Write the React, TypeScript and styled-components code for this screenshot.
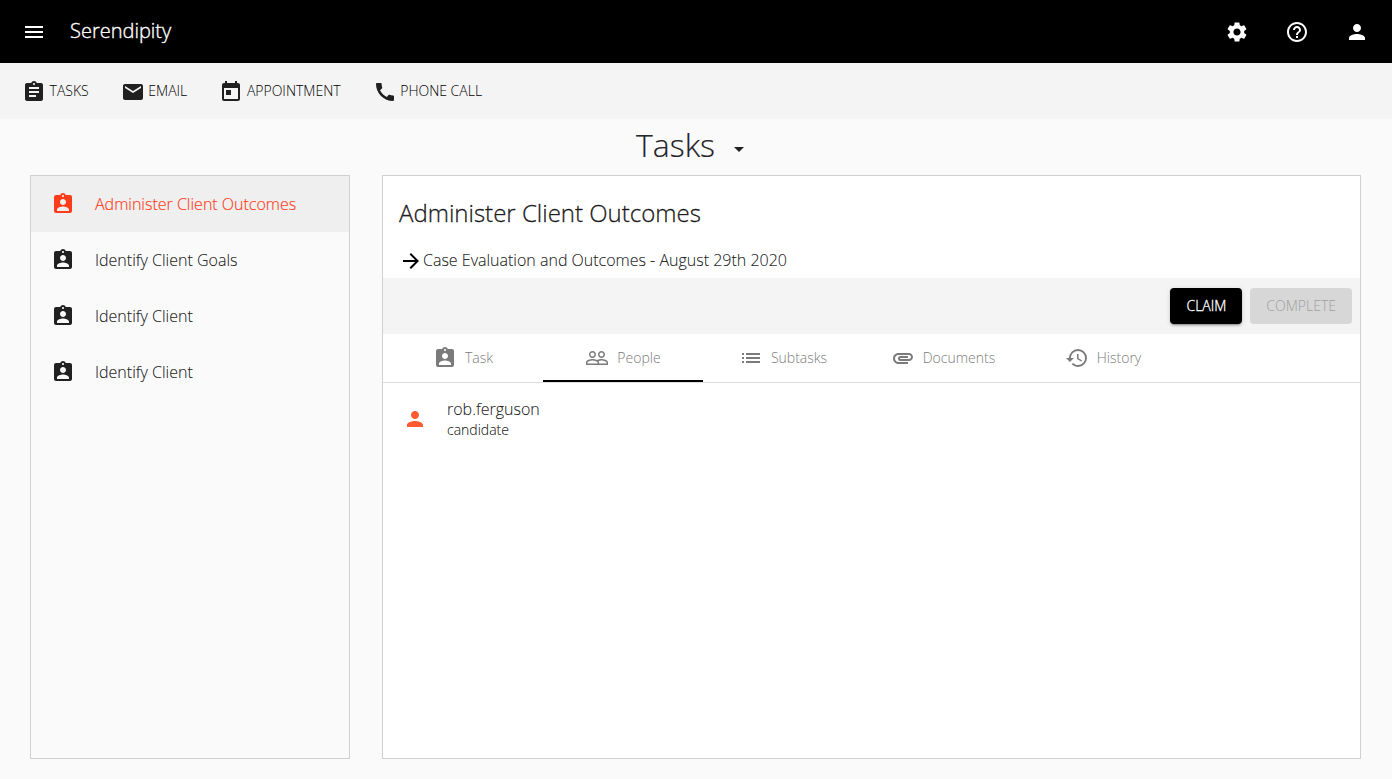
import React from 'react';
import styled, { createGlobalStyle } from 'styled-components';
import {
  MdMenu, MdSettings, MdHelpOutline, MdPerson, MdAssignment, MdEmail, MdToday, MdCall,
  MdArrowDropDown, MdAssignmentInd, MdArrowForward, MdList, MdAttachment, MdHistory,
} from 'react-icons/md';

const GlobalStyle = createGlobalStyle`
  * { box-sizing: border-box; }
  body {
    margin: 0;
    background: #fafafa;
    color: rgba(0, 0, 0, 0.87);
    font-family: "Open Sans", sans-serif;
    font-weight: 300;
    -webkit-font-smoothing: antialiased;
  }
  svg { display: block; flex: none; width: 24px; height: 24px; }
`;

const Page = styled.div`
  display: flex;
  flex-direction: column;
  height: 779px;
`;

const Header = styled.header`
  display: flex;
  align-items: center;
  height: 63px;
  padding: 1px 23px 0 22px;
  background: #000;
  color: #fff;
`;

const Brand = styled.span`
  margin: -3px auto 0 24px;
  font-size: 20px;
  line-height: 32px;
  font-weight: 300;
  -webkit-text-stroke: 0.35px currentColor;
`;

const HeaderActions = styled.div`
  display: flex;
  gap: 36px;
`;

const CommandBar = styled.nav`
  display: flex;
  align-items: center;
  gap: 32px;
  height: 56px;
  padding: 2px 22px 0;
  background: #f4f4f4;
`;

const Command = styled.a`
  display: flex;
  align-items: center;
  gap: 3.6px;
  font-size: 14px;
  line-height: 24px;

  span { margin-top: -3px; color: #000; }
`;

const Heading = styled.h1`
  display: flex;
  justify-content: center;
  align-items: center;
  gap: 12px;
  height: 56px;
  margin: 0;
  padding-right: 5px;
  font-size: 32px;
  line-height: 40px;
  font-weight: 300;
  -webkit-text-stroke: 0.2px currentColor;

  span { margin-top: -4px; }
  svg { margin-top: 4px; }
`;

const Content = styled.main`
  display: flex;
  flex: 1;
  gap: 32px;
  padding: 0 31px 20px 30px;
`;

const Sidebar = styled.aside`
  width: 320px;
  border: 1px solid #d0d0d0;
`;

const SidebarItem = styled.div<{ $active?: boolean }>`
  display: flex;
  align-items: center;
  gap: 20px;
  height: 56px;
  padding: 0 20px;
  font-size: 16px;
  background: ${(p) => (p.$active ? '#efefef' : 'transparent')};
  color: ${(p) => (p.$active ? '#ff3d1a' : 'inherit')};

  span { -webkit-text-stroke: 0.15px currentColor; }
`;

const Panel = styled.section`
  flex: 1;
  border: 1px solid #d0d0d0;
  background: #fff;
`;

const PanelTitle = styled.h2`
  margin: 0;
  padding: 21px 16px 0;
  font-size: 24px;
  line-height: 32px;
  font-weight: 300;
  -webkit-text-stroke: 0.35px currentColor;
`;

const CaseLine = styled.div`
  display: flex;
  align-items: center;
  height: 49px;
  padding: 13px 16px 0;
  font-size: 16px;
  line-height: 24px;

  svg { margin-top: 1px; color: #000; }
  span { margin-top: -1px; -webkit-text-stroke: 0.15px currentColor; }
`;

const ActionBar = styled.div`
  display: flex;
  justify-content: flex-end;
  align-items: center;
  gap: 8px;
  height: 56px;
  padding: 0 8px;
  background: #f4f4f4;
`;

const Button = styled.button`
  height: 36px;
  padding: 0 16px;
  border: 0;
  border-radius: 4px;
  font: 300 14px/36px "Open Sans", sans-serif;
  background: #000;
  color: #fff;
  -webkit-text-stroke: 0.3px currentColor;
  box-shadow: 0 3px 1px -2px rgba(0, 0, 0, 0.2), 0 2px 2px rgba(0, 0, 0, 0.14), 0 1px 5px rgba(0, 0, 0, 0.12);

  &:disabled {
    background: #d7d7d7;
    color: #a0a0a0;
    -webkit-text-stroke: 0;
    box-shadow: none;
  }
`;

const Tabs = styled.div`
  display: flex;
  height: 49px;
  border-bottom: 1px solid #dedede;
`;

const Tab = styled.div<{ $active?: boolean }>`
  display: flex;
  justify-content: center;
  align-items: center;
  gap: 8px;
  width: 160px;
  height: 48px;
  font-size: 14px;
  color: #7b7b7b;
  box-shadow: ${(p) => (p.$active ? 'inset 0 -2px #000' : 'none')};

  span { margin-top: -2px; }
`;

const Person = styled.div`
  display: flex;
  align-items: center;
  gap: 20px;
  height: 72px;
  padding: 0 20px;

  svg { color: #ff5a30; }
`;

const PersonName = styled.div`
  font-size: 16px;
  line-height: 22px;
  -webkit-text-stroke: 0.15px currentColor;
`;

const PersonRole = styled.div`
  font-size: 14px;
  line-height: 20px;
  -webkit-text-stroke: 0.15px currentColor;
`;

const PeopleIcon = () => (
  <svg viewBox="0 0 24 24" fill="currentColor">
    <path d="M16.5 13c-1.2 0-3.07.34-4.5 1-1.43-.67-3.3-1-4.5-1C5.33 13 1 14.08 1 16.25V19h22v-2.75c0-2.17-4.33-3.25-6.5-3.25zm-4 4.5h-10v-1.25c0-.54 2.56-1.75 5-1.75s5 1.21 5 1.75v1.25zm9 0H14v-1.25c0-.46-.2-.86-.52-1.22.88-.3 1.96-.53 3.02-.53 2.44 0 5 1.21 5 1.75v1.25zM7.5 12c1.93 0 3.5-1.57 3.5-3.5S9.43 5 7.5 5 4 6.57 4 8.5 5.57 12 7.5 12zm0-5.5c1.1 0 2 .9 2 2s-.9 2-2 2-2-.9-2-2 .9-2 2-2zm9 5.5c1.93 0 3.5-1.57 3.5-3.5S18.43 5 16.5 5 13 6.57 13 8.5s1.57 3.5 3.5 3.5zm0-5.5c1.1 0 2 .9 2 2s-.9 2-2 2-2-.9-2-2 .9-2 2-2z" />
  </svg>
);

const commands = [
  { label: 'TASKS', Icon: MdAssignment },
  { label: 'EMAIL', Icon: MdEmail },
  { label: 'APPOINTMENT', Icon: MdToday },
  { label: 'PHONE CALL', Icon: MdCall },
];

const tasks = ['Administer Client Outcomes', 'Identify Client Goals', 'Identify Client', 'Identify Client'];

const tabs = [
  { label: 'Task', Icon: MdAssignmentInd },
  { label: 'People', Icon: PeopleIcon },
  { label: 'Subtasks', Icon: MdList },
  { label: 'Documents', Icon: MdAttachment },
  { label: 'History', Icon: MdHistory },
];

export default function App() {
  return (
    <Page>
      <GlobalStyle />
      <Header>
        <MdMenu />
        <Brand>Serendipity</Brand>
        <HeaderActions>
          <MdSettings />
          <MdHelpOutline />
          <MdPerson />
        </HeaderActions>
      </Header>
      <CommandBar>
        {commands.map(({ label, Icon }) => (
          <Command key={label}>
            <Icon />
            <span>{label}</span>
          </Command>
        ))}
      </CommandBar>
      <Heading>
        <span>Tasks</span>
        <MdArrowDropDown />
      </Heading>
      <Content>
        <Sidebar>
          {tasks.map((task, i) => (
            <SidebarItem key={i} $active={i === 0}>
              <MdAssignmentInd />
              <span>{task}</span>
            </SidebarItem>
          ))}
        </Sidebar>
        <Panel>
          <PanelTitle>Administer Client Outcomes</PanelTitle>
          <CaseLine>
            <MdArrowForward />
            <span>Case Evaluation and Outcomes - August 29th 2020</span>
          </CaseLine>
          <ActionBar>
            <Button>CLAIM</Button>
            <Button disabled>COMPLETE</Button>
          </ActionBar>
          <Tabs>
            {tabs.map(({ label, Icon }) => (
              <Tab key={label} $active={label === 'People'}>
                <Icon />
                <span>{label}</span>
              </Tab>
            ))}
          </Tabs>
          <Person>
            <MdPerson />
            <div>
              <PersonName>rob.ferguson</PersonName>
              <PersonRole>candidate</PersonRole>
            </div>
          </Person>
        </Panel>
      </Content>
    </Page>
  );
}
